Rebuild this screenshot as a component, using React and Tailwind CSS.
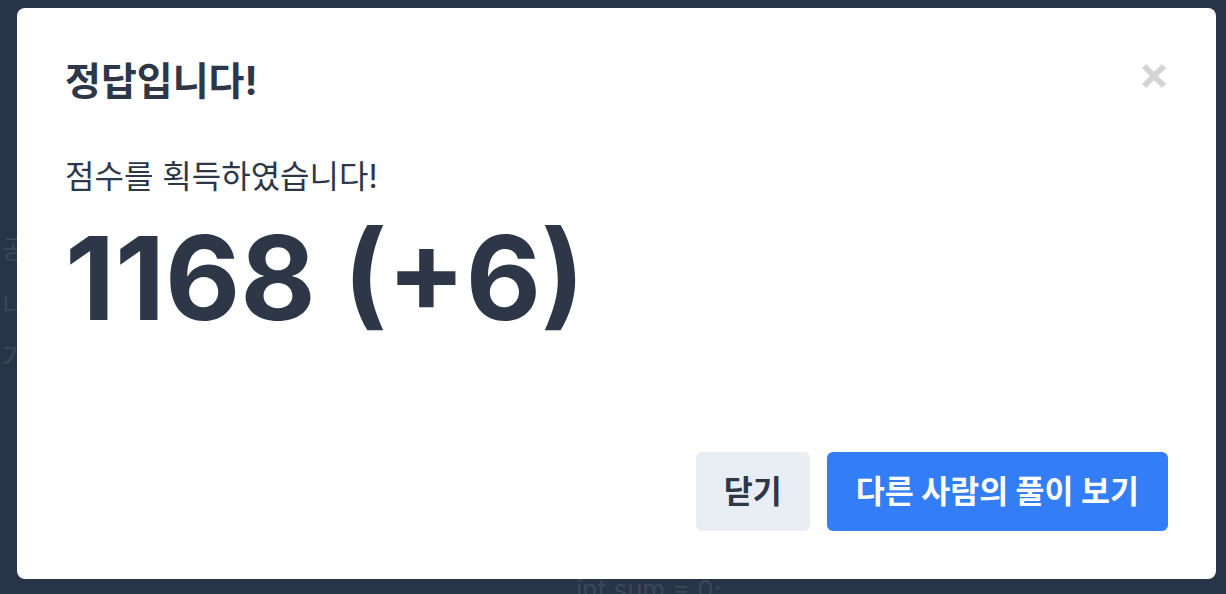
import React from 'react';

const App = () => {
    return (
        <div className="relative w-[1226px] h-[594px] overflow-hidden bg-[#283447] font-['Inter','Noto_Sans_CJK_KR',sans-serif]">
            {/* page behind the overlay */}
            <div className="absolute inset-0 text-[#3b475a] text-[26px] leading-[48px]">
                <div className="absolute left-[2px] top-[226px]">공</div>
                <div className="absolute left-[2px] top-[282px]">니</div>
                <div className="absolute left-[2px] top-[334px]">기</div>
                <div className="absolute left-[576px] top-[566px]">int sum = 0;</div>
            </div>

            <div className="absolute left-[17px] top-[8px] w-[1199px] h-[571px] bg-white rounded-lg p-12 flex flex-col text-[#2d3748]">
                <div className="flex items-start justify-between">
                    <h1 className="text-[39px] font-bold leading-[48px] mt-[1px]">정답입니다!</h1>
                    <button className="mt-[6px] text-[#d4d4d4]">
                        <svg width="28" height="28" viewBox="0 0 28 28">
                            <path d="M4 4 L24 24 M24 4 L4 24" stroke="currentColor" strokeWidth="6" strokeLinecap="butt" />
                        </svg>
                    </button>
                </div>

                <p className="mt-[50px] text-[32px] leading-[44px]">점수를 획득하였습니다!</p>
                <div className="mt-[21px] text-[116px] font-bold leading-none">1168 (+6)</div>

                <div className="mt-auto flex justify-end gap-[17px]">
                    <button className="h-[79px] px-[28px] rounded-md bg-[#e9edf4] text-[31.5px] font-bold text-[#2d3748]">
                        닫기
                    </button>
                    <button className="h-[79px] px-[29px] rounded-md bg-[#337df6] text-[31.5px] font-bold text-white">
                        다른 사람의 풀이 보기
                    </button>
                </div>
            </div>
        </div>
    );
};

export default App;
